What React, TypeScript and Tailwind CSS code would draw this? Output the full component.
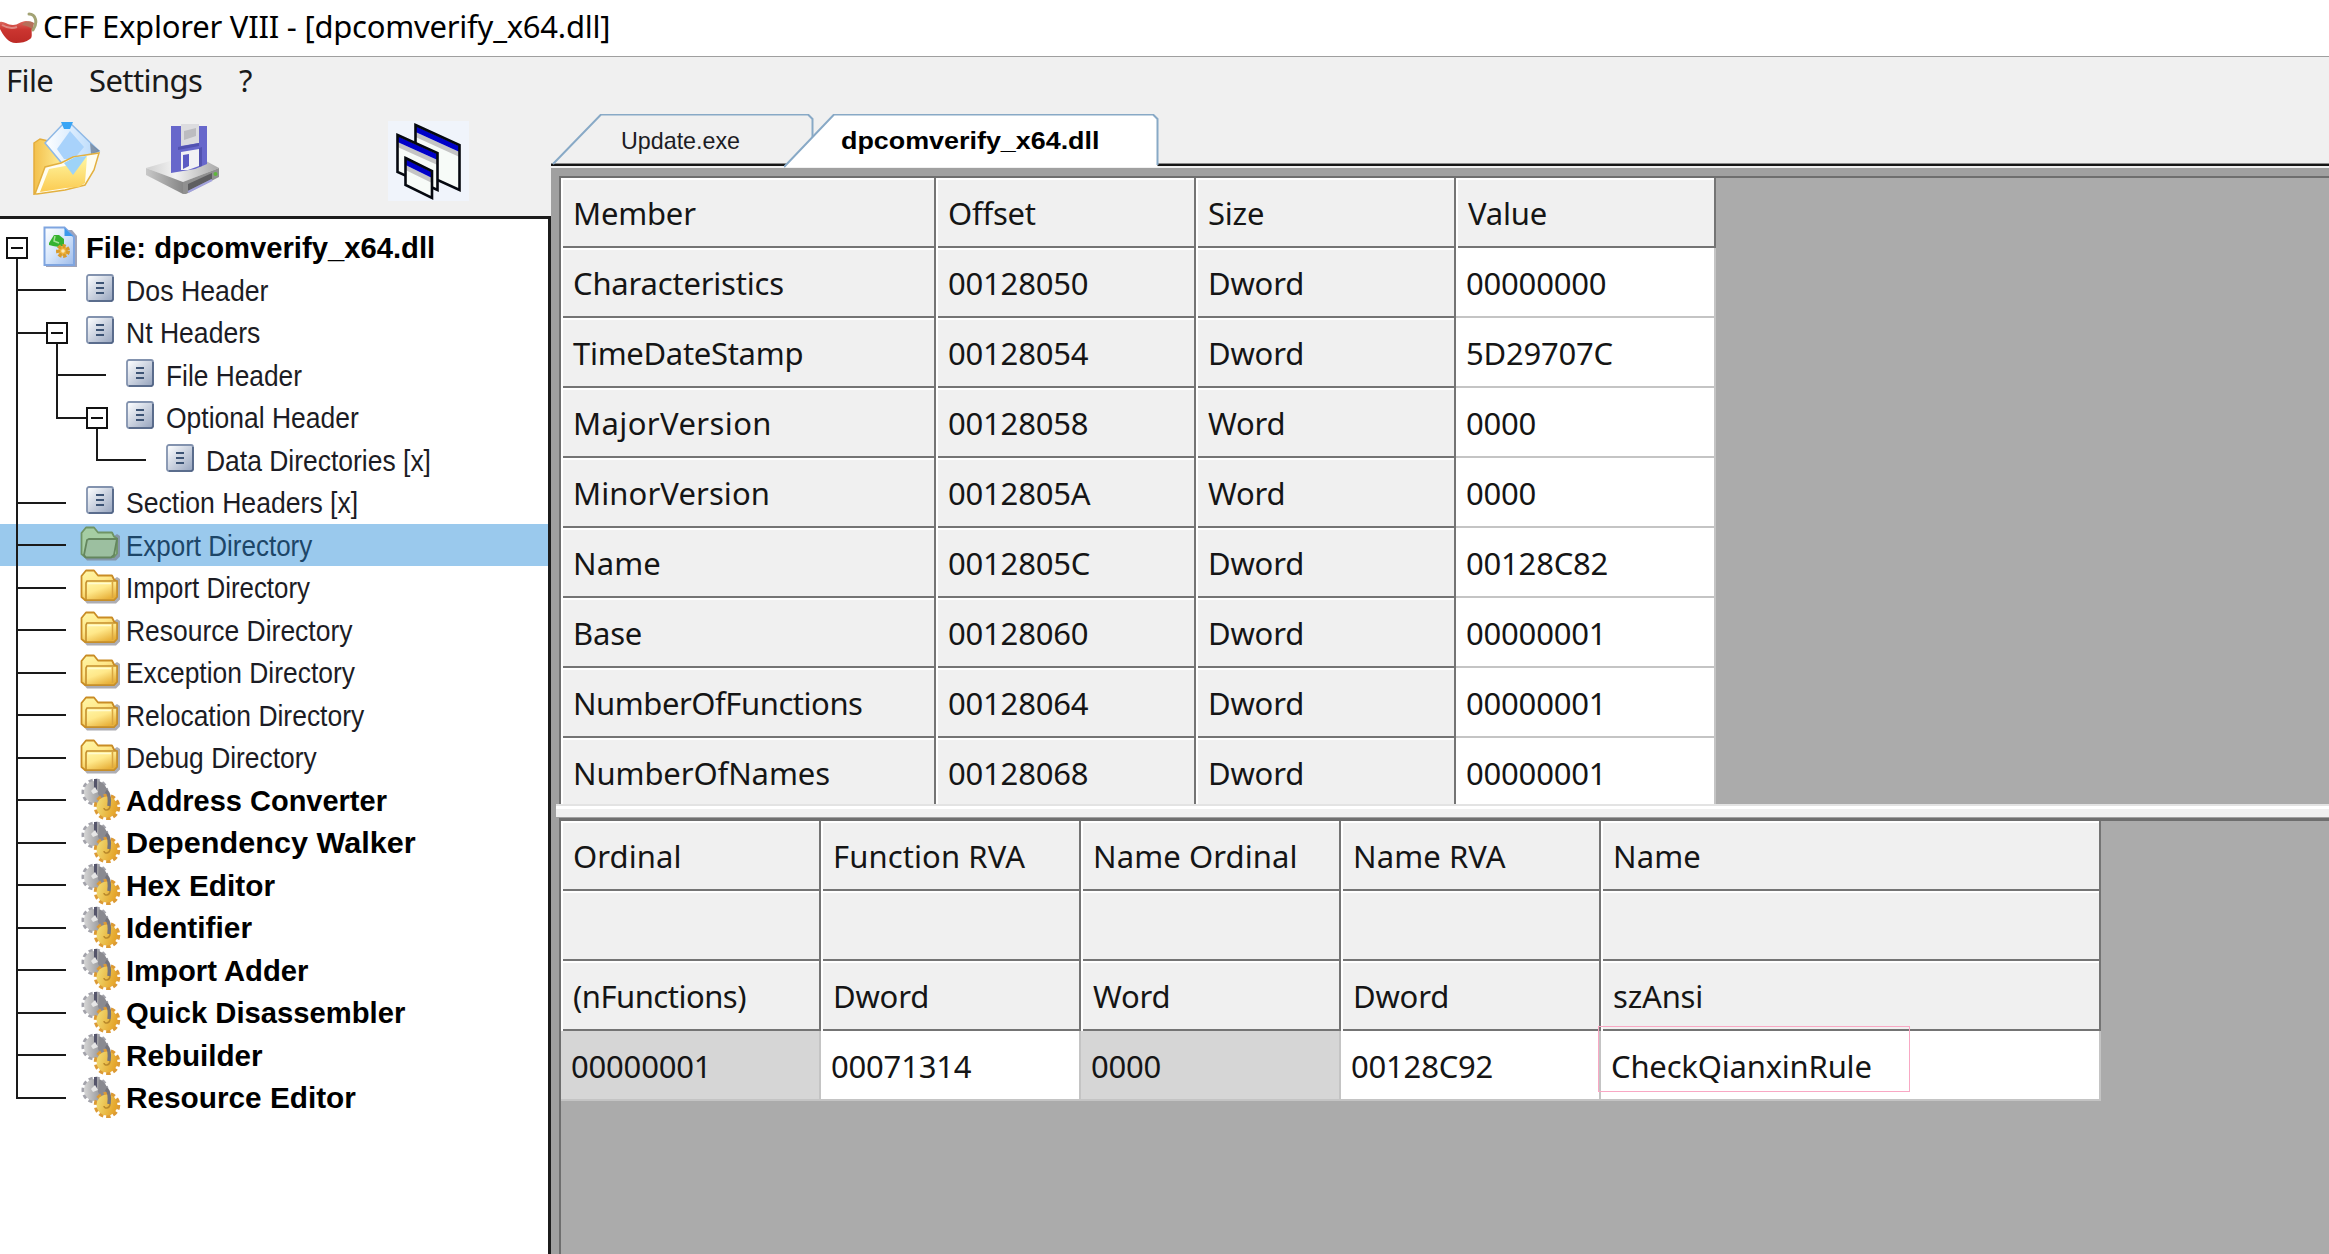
import type { ReactNode } from 'react';

const UI = "font-['Noto_Sans',sans-serif]";
const SANS = "font-['Liberation_Sans',Arial,sans-serif]";

/* ---------- icons ---------- */

function ChiliIcon() {
  return (
    <svg className="h-[34px] w-[38px] shrink-0" viewBox="0 0 38 34">
      <defs>
        <linearGradient id="chili" x1="0" y1="0" x2="0" y2="1">
          <stop offset="0" stopColor="#dc6a60" />
          <stop offset=".4" stopColor="#cb3530" />
          <stop offset="1" stopColor="#bd2a26" />
        </linearGradient>
      </defs>
      <path
        d="M0 11c4-1 7 3 13 3 5 0 8-4 13-4 4 0 7 3 6 8-1 4 1 8-2 10-4 3-9 4-14 4C8 32 3 24 0 18z"
        fill="url(#chili)"
      />
      <path d="M2 14c5 3 10 4 15 2" stroke="#e08a84" strokeWidth="2" fill="none" />
      <path d="M22 14c2-4 8-5 12-2l-1 7c-3-3-6-4-11-5z" fill="#b5705a" />
      <path d="M29 3c7 0 9 9 4 16" stroke="#a3a374" strokeWidth="3" fill="none" strokeLinecap="round" />
    </svg>
  );
}

function OpenIcon() {
  return (
    <svg className="h-[74px] w-[68px] shrink-0" viewBox="0 0 68 74">
      <defs>
        <linearGradient id="ofBack" x1="0" y1="0" x2="1" y2="0">
          <stop offset="0" stopColor="#f3c04c" />
          <stop offset="1" stopColor="#fff09a" />
        </linearGradient>
        <linearGradient id="ofFront" x1="0" y1="0" x2="0" y2="1">
          <stop offset="0" stopColor="#fff6a0" />
          <stop offset="1" stopColor="#fbcb52" />
        </linearGradient>
        <linearGradient id="ofPaper" x1="0" y1="0" x2="1" y2="0">
          <stop offset="0" stopColor="#ffffff" />
          <stop offset="1" stopColor="#b5d8fb" />
        </linearGradient>
      </defs>
      <path d="M1 22l6-4 8 2 16 22-30 31z" fill="url(#ofBack)" stroke="#e3ac3c" strokeWidth="1.500" />
      <path d="M31 2h6l29 28-34 16-20-24z" fill="url(#ofPaper)" stroke="#8fb9e6" strokeWidth="1.500" />
      <path d="M37 10l14 16-10 12H31l-7-10z" fill="#a8d2fb" />
      <path d="M28 1h12l-3 7h-6z" fill="#39a5f5" />
      <path d="M57 22l10 8-9 3z" fill="#69788c" opacity=".7" />
      <path
        d="M2 73l10-27 16-4 12-6 26-4-5 17-9 15-20 5-28 4z"
        fill="#fffdf0"
        stroke="#e3b03f"
        strokeWidth="1.500"
      />
      <path d="M7 71l9-23 16-3 10-6 12-3-2 26-6 4-13 1z" fill="url(#ofFront)" />
      <path d="M31 42l11-6 12-1-14 19z" fill="#9dd3f8" />
    </svg>
  );
}

function SaveIcon() {
  return (
    <svg className="h-[72px] w-[74px] shrink-0" viewBox="0 0 74 72">
      <defs>
        <linearGradient id="svTop" x1="0" y1="0" x2="1" y2="0">
          <stop offset="0" stopColor="#cfcfcf" />
          <stop offset=".4" stopColor="#f2f2f2" />
          <stop offset="1" stopColor="#a8a8a8" />
        </linearGradient>
        <linearGradient id="svSide" x1="0" y1="0" x2="1" y2="0">
          <stop offset="0" stopColor="#c8c8c8" />
          <stop offset="1" stopColor="#868686" />
        </linearGradient>
      </defs>
      <path d="M0 44l24-7 36 0 13 7-36 14z" fill="url(#svTop)" />
      <path d="M0 44l37 14v12L0 51z" fill="url(#svSide)" />
      <path d="M37 58l36-14v9l-33 17h-3z" fill="#909090" />
      <path d="M42 60l24-11v6l-24 12z" fill="#5e5e60" />
      <path d="M42 68l24-12" stroke="#a2a2dc" strokeWidth="2" />
      <circle cx="69.500" cy="50" r="2" fill="#5fb63c" />
      <path d="M25 2h36v38l-12 5-24 4z" fill="#6767cb" />
      <path d="M35 0h18v19l-18 3z" fill="#dcdcdf" />
      <path d="M38 7l12-3v8l-12 4z" fill="#bcbcc0" />
      <path d="M35 28l18-3v17l-11 4-7 0z" fill="#f2f2f4" />
      <path d="M37 31l6-1v12l-6 3z" fill="#5b5bc4" />
      <path d="M53 24l3-1v19l-3 1zM32 23l21-4v3l-21 4z" fill="#5252b0" />
    </svg>
  );
}

function WindowsIcon() {
  const win = (x: number, y: number, w: number, h: number, s: number) => (
    <g>
      <path d={`M${x} ${y}l${w} ${s}v${h}l${-w} ${-s}z`} fill="#f7fbf8" />
      <path d={`M${x} ${y + 7}l${w} ${s}v5l${-w} ${-s}z`} fill="#c4c4c4" />
      <path d={`M${x} ${y + 1}l${w} ${s}v6l${-w} ${-s}z`} fill="#0000c8" />
      <path d={`M${x} ${y}l${w} ${s}v${h}l${-w} ${-s}z`} fill="none" stroke="#05080f" strokeWidth="2.600" />
    </g>
  );
  return (
    <svg className="h-[80px] w-[81px] shrink-0 bg-[#f0f4fb]" viewBox="0 0 81 80">
      {win(27.5, 4, 44, 45, 20)}
      {win(9.500, 14, 40, 37, 18)}
      {win(17.500, 37, 26.500, 27, 13)}
    </svg>
  );
}

function ModuleIcon() {
  return (
    <svg className="h-[42px] w-[35px]" viewBox="0 0 35 42">
      <defs>
        <linearGradient id="mod" x1="0" y1="0" x2="1" y2="1">
          <stop offset="0" stopColor="#ffffff" />
          <stop offset=".5" stopColor="#d5e5fb" />
          <stop offset="1" stopColor="#9ebbe9" />
        </linearGradient>
      </defs>
      <path d="M3 4h26l5 6v31H3z" fill="#8286a0" opacity=".75" />
      <path d="M1.500 1.500h20L31 11v28H1.500z" fill="url(#mod)" stroke="#7fa5e0" strokeWidth="2" />
      <path d="M21.500 2v8H30z" fill="#3b98ec" />
      <path d="M6 17l5-8h5l5 4v7l-5 1-6-1-4-1z" fill="#35b232" />
      <path d="M12 10l-1 5 5 2" stroke="#9fe294" strokeWidth="1.500" fill="none" />
      <circle cx="20" cy="25" r="5" fill="#f0b43c" stroke="#d89a2c" strokeWidth="4" strokeDasharray="3 1.500" />
      <circle cx="20" cy="25" r="1.800" fill="#fbe9b8" />
    </svg>
  );
}

function HeaderIcon() {
  return (
    <svg className="h-[28px] w-[28px]" viewBox="0 0 28 28">
      <defs>
        <linearGradient id="hdr" x1="0" y1="0" x2="1" y2="1">
          <stop offset=".1" stopColor="#f6f8fb" />
          <stop offset="1" stopColor="#95a3bd" />
        </linearGradient>
      </defs>
      <rect x="1" y="1" width="26" height="26" rx="2" fill="url(#hdr)" stroke="#8292ae" strokeWidth="1.800" />
      <path d="M27 3v22.500l-1.500 1.500H3" stroke="#4f6283" strokeWidth="1.600" fill="none" />
      <path d="M10 9h8M10 14h8M10 19h8" stroke="#3d5475" strokeWidth="2" />
    </svg>
  );
}

function FolderIcon({ open = false }: { open?: boolean }) {
  return (
    <svg className="h-[36px] w-[42px]" viewBox="0 0 42 36">
      <defs>
        <linearGradient id="fold" x1="0" y1="0" x2=".6" y2="1">
          <stop offset="0" stopColor="#fff7a8" />
          <stop offset=".5" stopColor="#ffe88a" />
          <stop offset="1" stopColor="#e8b13a" />
        </linearGradient>
      </defs>
      <path d="M4 31l3 3.500h29l4-4V10l-3-2z" fill="#77777f" opacity=".6" />
      <path
        d="M1.500 7L6 1.500h8l4 5h14l2 4 3 2v15l-3 3.500H5L1.500 28z"
        fill={open ? '#a5cda3' : 'url(#fold)'}
        stroke={open ? '#6f9465' : '#c98c25'}
        strokeWidth="1.800"
        strokeLinejoin="round"
      />
      {open ? (
        <path d="M4 29l3-15 2-1h28l-3 16-3 2.500H6z" fill="#9cbfa0" stroke="#64865e" strokeWidth="1.800" />
      ) : (
        <>
          <path d="M6 31V14l1-2h30v16l-3 3z" fill="url(#fold)" stroke="#c58f2d" strokeWidth="1.600" />
          <path d="M32.500 13v16" stroke="#d9a640" strokeWidth="1.500" />
          <path d="M8 14.500h23" stroke="#fffbd0" strokeWidth="1.500" />
        </>
      )}
    </svg>
  );
}

function GearsIcon() {
  return (
    <svg className="h-[42px] w-[42px]" viewBox="0 0 42 42">
      <defs>
        <linearGradient id="grey" x1="0" y1="0" x2="1" y2="0">
          <stop offset="0" stopColor="#d6d6d6" />
          <stop offset="1" stopColor="#828286" />
        </linearGradient>
        <linearGradient id="gold" x1="0" y1="0" x2="1" y2="0.300">
          <stop offset="0" stopColor="#f2e07a" />
          <stop offset="1" stopColor="#e5a52a" />
        </linearGradient>
      </defs>
      <circle cx="14" cy="14" r="11.500" fill="none" stroke="#a3a3ab" strokeWidth="4" strokeDasharray="4 2.800" />
      <circle cx="14" cy="14" r="11" fill="url(#grey)" />
      <path d="M14.500 1v12" stroke="#55556a" strokeWidth="3" />
      <path d="M14 9l3 5-5 2-2-3z" fill="#e6e6e6" />
      <path d="M18 3c7 3 10 10 10 18l-5 3-6-8z" fill="#8a8a90" />
      <circle cx="26" cy="29" r="11" fill="none" stroke="#dc9a35" strokeWidth="4.500" strokeDasharray="4.200 2.700" />
      <circle cx="26" cy="29" r="10.500" fill="url(#gold)" />
      <path d="M25 13c3 2 4 7 3 15" stroke="#74747c" strokeWidth="3.500" fill="none" />
      <path d="M23 30c0 3 6 3 6-2" stroke="#b9892b" strokeWidth="1.500" fill="none" />
    </svg>
  );
}

/* ---------- tree ---------- */

type Guide = 'pass' | 'tee' | 'elbow' | 'none';
type Kind = 'module' | 'header' | 'folder' | 'gears';
interface Node {
  label: string;
  kind: Kind;
  guides: Guide[];
  stretch: string;
  expanded?: boolean;
  selected?: boolean;
}

const NODES: Node[] = [
  { label: 'File: dpcomverify_x64.dll', kind: 'module', guides: [], stretch: 'scale-x-[0.974]', expanded: true },
  { label: 'Dos Header', kind: 'header', guides: ['tee'], stretch: 'scale-x-[0.89]' },
  { label: 'Nt Headers', kind: 'header', guides: ['tee'], stretch: 'scale-x-[0.885]', expanded: true },
  { label: 'File Header', kind: 'header', guides: ['pass', 'tee'], stretch: 'scale-x-[0.877]' },
  { label: 'Optional Header', kind: 'header', guides: ['pass', 'elbow'], stretch: 'scale-x-[0.882]', expanded: true },
  { label: 'Data Directories [x]', kind: 'header', guides: ['pass', 'none', 'elbow'], stretch: 'scale-x-[0.882]' },
  { label: 'Section Headers [x]', kind: 'header', guides: ['tee'], stretch: 'scale-x-[0.887]' },
  { label: 'Export Directory', kind: 'folder', guides: ['tee'], stretch: 'scale-x-[0.866]', selected: true },
  { label: 'Import Directory', kind: 'folder', guides: ['tee'], stretch: 'scale-x-[0.862]' },
  { label: 'Resource Directory', kind: 'folder', guides: ['tee'], stretch: 'scale-x-[0.882]' },
  { label: 'Exception Directory', kind: 'folder', guides: ['tee'], stretch: 'scale-x-[0.88]' },
  { label: 'Relocation Directory', kind: 'folder', guides: ['tee'], stretch: 'scale-x-[0.882]' },
  { label: 'Debug Directory', kind: 'folder', guides: ['tee'], stretch: 'scale-x-[0.88]' },
  { label: 'Address Converter', kind: 'gears', guides: ['tee'], stretch: 'scale-x-[0.966]' },
  { label: 'Dependency Walker', kind: 'gears', guides: ['tee'], stretch: 'scale-x-[1.02]' },
  { label: 'Hex Editor', kind: 'gears', guides: ['tee'], stretch: 'scale-x-[0.993]' },
  { label: 'Identifier', kind: 'gears', guides: ['tee'], stretch: 'scale-x-[0.995]' },
  { label: 'Import Adder', kind: 'gears', guides: ['tee'], stretch: 'scale-x-[0.974]' },
  { label: 'Quick Disassembler', kind: 'gears', guides: ['tee'], stretch: 'scale-x-[0.974]' },
  { label: 'Rebuilder', kind: 'gears', guides: ['tee'], stretch: 'scale-x-[0.987]' },
  { label: 'Resource Editor', kind: 'gears', guides: ['elbow'], stretch: 'scale-x-[0.992]' },
];

function GuideCell({ guide }: { guide: Guide }) {
  return (
    <span className="relative h-full w-10 shrink-0">
      {(guide === 'pass' || guide === 'tee') && <span className="absolute inset-y-0 left-4 w-[2px] bg-[#1a1a1a]" />}
      {guide === 'elbow' && <span className="absolute top-0 left-4 h-[22px] w-[2px] bg-[#1a1a1a]" />}
      {(guide === 'tee' || guide === 'elbow') && (
        <span className="absolute top-[20.5px] left-4 h-[2px] w-[50px] bg-[#1a1a1a]" />
      )}
    </span>
  );
}

function TreeRow({ node }: { node: Node }) {
  const bold = node.kind === 'module' || node.kind === 'gears';
  return (
    <div className={`flex h-[42.5px] items-center ${node.selected ? 'bg-[#9ac9ed]' : ''}`}>
      {node.guides.map((g, i) => (
        <GuideCell key={i} guide={g} />
      ))}
      <span className="relative h-full w-10 shrink-0">
        {node.expanded && (
          <>
            <span className="absolute top-1/2 bottom-0 left-4 w-[2px] bg-[#1a1a1a]" />
            <span className="absolute top-[10.5px] left-[6px] flex h-[22px] w-[22px] items-center justify-center border-2 border-[#111] bg-white">
              <span className="h-[2px] w-3 bg-[#111]" />
            </span>
          </>
        )}
      </span>
      <span className="flex h-full w-[46px] shrink-0 items-center">
        {node.kind === 'module' && (
          <span className="-mt-px ml-[3px]">
            <ModuleIcon />
          </span>
        )}
        {node.kind === 'header' && (
          <span className="-mt-1 ml-[6px]">
            <HeaderIcon />
          </span>
        )}
        {node.kind === 'folder' && (
          <span className="-mt-px">
            <FolderIcon open={node.selected} />
          </span>
        )}
        {node.kind === 'gears' && (
          <span className="-mt-px ml-px">
            <GearsIcon />
          </span>
        )}
      </span>
      <span
        className={`${SANS} origin-left pt-[2px] text-[30px] leading-none whitespace-pre ${node.stretch} ${
          bold ? 'font-bold text-black' : node.selected ? 'text-[#1d4668]' : 'text-[#1c1c24]'
        }`}
      >
        {node.label}
      </span>
    </div>
  );
}

/* ---------- grids ---------- */

function HeadCell({ w, text = 'tracking-[-0.2px]', children }: { w: string; text?: string; children?: ReactNode }) {
  return (
    <div className={`${w} h-[70px] shrink-0 border-r-2 border-[#747474] bg-white pl-[2px]`}>
      <div
        className={`flex h-full items-center border-b-2 border-[#747474] bg-[#f0f0f0] pt-[3px] pl-[10px] shadow-[inset_0_2px_0_#fff] ${text}`}
      >
        <span>{children}</span>
      </div>
    </div>
  );
}

function ValueCell({ w, grey = false, children }: { w: string; grey?: boolean; children?: ReactNode }) {
  return (
    <div
      className={`${w} flex h-[70px] shrink-0 items-center border-r-2 border-b-2 border-[#c4c4c4] pt-[3px] pl-[10px] tracking-[-0.2px] ${
        grey ? 'bg-[#d6d6d6]' : 'bg-white'
      }`}
    >
      <span>{children}</span>
    </div>
  );
}

const MEMBERS = [
  { name: 'Characteristics', offset: '00128050', size: 'Dword', value: '00000000' },
  { name: 'TimeDateStamp', offset: '00128054', size: 'Dword', value: '5D29707C', text: 'tracking-[-0.3px]' },
  { name: 'MajorVersion', offset: '00128058', size: 'Word', value: '0000', text: 'tracking-[0.4px]' },
  { name: 'MinorVersion', offset: '0012805A', size: 'Word', value: '0000', text: 'tracking-[0.1px]' },
  { name: 'Name', offset: '0012805C', size: 'Dword', value: '00128C82', text: 'tracking-[0.1px]' },
  { name: 'Base', offset: '00128060', size: 'Dword', value: '00000001' },
  { name: 'NumberOfFunctions', offset: '00128064', size: 'Dword', value: '00000001', text: 'tracking-[-0.45px]' },
  { name: 'NumberOfNames', offset: '00128068', size: 'Dword', value: '00000001', text: 'tracking-[-0.1px]' },
];

const EXPORT_HEAD = [
  ['Ordinal', 'Function RVA', 'Name Ordinal', 'Name RVA', 'Name'],
  ['', '', '', '', ''],
  ['(nFunctions)', 'Dword', 'Word', 'Dword', 'szAnsi'],
];

const GRID_TEXT = `${UI} text-[31px] leading-none text-[#151515]`;

function MemberGrid() {
  return (
    <div className={`${GRID_TEXT} h-[626px] shrink-0 overflow-hidden bg-[#ababab]`}>
      <div className="flex">
        <HeadCell w="w-[375px]">Member</HeadCell>
        <HeadCell w="w-[260px]">Offset</HeadCell>
        <HeadCell w="w-[260px]">Size</HeadCell>
        <HeadCell w="w-[260px]">Value</HeadCell>
      </div>
      {MEMBERS.map((m) => (
        <div className="flex" key={m.name}>
          <HeadCell w="w-[375px]" text={m.text}>
            {m.name}
          </HeadCell>
          <HeadCell w="w-[260px]">{m.offset}</HeadCell>
          <HeadCell w="w-[260px]">{m.size}</HeadCell>
          <ValueCell w="w-[260px]">{m.value}</ValueCell>
        </div>
      ))}
    </div>
  );
}

function ExportGrid() {
  return (
    <div className={`${GRID_TEXT} min-h-0 flex-1 bg-[#ababab]`}>
      {EXPORT_HEAD.map((row, r) => (
        <div className="flex" key={r}>
          {row.map((text, c) => (
            <HeadCell
              key={c}
              w={c === 4 ? 'w-[500px]' : 'w-[260px]'}
              text={r === 0 ? 'tracking-[0.1px]' : c === 0 ? 'tracking-[-0.5px]' : undefined}
            >
              {text}
            </HeadCell>
          ))}
        </div>
      ))}
      <div className="flex">
        <ValueCell w="w-[260px]" grey>00000001</ValueCell>
        <ValueCell w="w-[260px]">00071314</ValueCell>
        <ValueCell w="w-[260px]" grey>0000</ValueCell>
        <ValueCell w="w-[260px]">00128C92</ValueCell>
        <div className="relative tracking-[-0.4px]">
          <ValueCell w="w-[500px]">CheckQianxinRule</ValueCell>
          <span className="absolute top-[-5px] left-[-3px] h-[66px] w-[312px] border border-[#f9a8c4]" />
        </div>
      </div>
    </div>
  );
}

/* ---------- tabs ---------- */

function Tabs() {
  return (
    <div className="relative flex h-[63px] shrink-0 items-end">
      <span className="absolute top-[58px] right-0 left-0 h-[3px] border-t border-[#8a8a8a] bg-[#161616]" />
      <div className="relative h-[54px] w-[233px] shrink-0">
        <svg className="absolute top-0 left-0 h-[54px] w-[264px]" viewBox="0 0 264 54">
          <path d="M2 49L50 0.500H257L261.500 5V49z" fill="#f0f0f0" />
          <path d="M2 50L50 0.500H257L261.500 5V26" fill="none" stroke="#88a9c6" strokeWidth="2" />
        </svg>
        <span
          className={`${SANS} absolute top-[15px] left-[70px] origin-left scale-x-[0.97] text-[24px] leading-none text-[#1c1c24]`}
        >
          Update.exe
        </span>
      </div>
      <div className="relative h-[54px] w-[375px] shrink-0">
        <svg className="absolute top-0 left-0 h-[54px] w-[375px]" viewBox="0 0 375 54">
          <path d="M0 53L50 0.500H369L373.500 5V53z" fill="#fff" />
          <path d="M0 53L50 0.500H369L373.500 5V51" fill="none" stroke="#88a9c6" strokeWidth="2" />
        </svg>
        <span
          className={`${SANS} absolute top-[15px] left-[57px] origin-left scale-x-[1.12] text-[24px] leading-none font-bold text-black`}
        >
          dpcomverify_x64.dll
        </span>
      </div>
    </div>
  );
}

export default function App() {
  return (
    <div className="flex h-[1254px] w-[2329px] flex-col overflow-hidden bg-[#f0f0f0]">
      <header className="flex h-[57px] shrink-0 items-center border-b border-[#9f9f9f] bg-white">
        <ChiliIcon />
        <span className={`${UI} ml-[5px] pb-1 text-[31px] leading-none tracking-[-0.23px] whitespace-pre text-black`}>
          CFF Explorer VIII - [dpcomverify_x64.dll]
        </span>
      </header>
      <nav
        className={`${UI} flex h-12 shrink-0 items-center pb-[2px] text-[31px] leading-none tracking-[-0.6px] text-[#1a1a1a]`}
      >
        <span className="w-[83px] pl-[6px]">File</span>
        <span className="w-[156px] pl-[6px]">Settings</span>
        <span>?</span>
      </nav>
      <div className="flex min-h-0 flex-1">
        <aside className="flex w-[551px] shrink-0 flex-col">
          <div className="flex h-[111px] shrink-0 items-start pt-4 pl-[33px]">
            <OpenIcon />
            <div className="w-[45px]" />
            <div className="pt-[3px]">
              <SaveIcon />
            </div>
            <div className="w-[168px]" />
            <WindowsIcon />
          </div>
          <div className="min-h-0 flex-1 border-t-[3px] border-r-[3px] border-[#1c1c1c] bg-white pt-[7px]">
            {NODES.map((n) => (
              <TreeRow key={n.label} node={n} />
            ))}
          </div>
        </aside>
        <main className="flex min-w-0 flex-1 flex-col">
          <Tabs />
          <div className="flex min-h-0 flex-1 flex-col bg-[#a0a0a0] pt-2">
            <div className="ml-2 shrink-0 border-t-2 border-l-2 border-[#6e6e6e]">
              <MemberGrid />
            </div>
            <div className="ml-[5px] h-[13px] shrink-0 border-t-2 border-[#e3e3e3] bg-[#f0f0f0] shadow-[inset_0_3px_0_#fff]" />
            <div className="mt-px ml-2 flex min-h-0 flex-1 flex-col border-t-[3px] border-l-2 border-[#6e6e6e]">
              <ExportGrid />
            </div>
          </div>
        </main>
      </div>
    </div>
  );
}
